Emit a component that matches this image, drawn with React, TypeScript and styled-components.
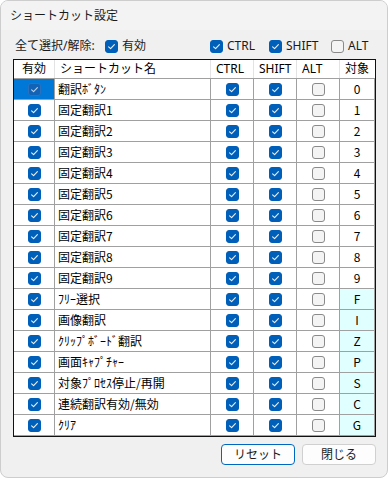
import React from "react";
import styled, { createGlobalStyle } from "styled-components";

const Global = createGlobalStyle`
  html, body { margin: 0; padding: 0; background: #ffffff; }
  *, *::before, *::after { box-sizing: border-box; }
`;

const UI_FONT = `"Noto Sans", "Noto Sans CJK JP", sans-serif`;
const GRID_FONT = `"Noto Sans CJK JP", "Noto Sans", sans-serif`;

const COLS = "41px 156px 43px 43px 43px 35px";

const Window = styled.div`
  width: 388px;
  height: 478px;
  border: 1px solid #cdcdcd;
  border-radius: 8px;
  background: #f0f0f0;
  overflow: hidden;
  display: flex;
  flex-direction: column;
  font-family: ${UI_FONT};
  color: #1b1b1b;
`;

const TitleBar = styled.div`
  height: 29px;
  flex: none;
  display: flex;
  align-items: center;
  padding-left: 9px;
  background: #f3f3f3;
  font-size: 12px;
  line-height: 1;
`;

const Body = styled.div`
  display: flex;
  flex-direction: column;
  padding: 0 12px;
`;

const OptionsRow = styled.div`
  margin-top: 6px;
  height: 20px;
  display: grid;
  grid-template-columns: 92px 105px 59px 62px 45px;
  align-items: center;
  font-size: 12px;
  line-height: 1;
`;

const OptionLabel = styled.span`
  padding-left: 2px;
  white-space: nowrap;
`;

const OptionItem = styled.label`
  display: flex;
  align-items: center;
  gap: 4px;
  white-space: nowrap;
`;

const Box = styled.span<{ $checked: boolean; $onSelected?: boolean }>`
  width: 13px;
  height: 13px;
  flex: none;
  border-radius: 3px;
  display: inline-flex;
  align-items: center;
  justify-content: center;
  background: ${(p) =>
    p.$checked ? (p.$onSelected ? "#1263b6" : "#005fb8") : "#f4f4f4"};
  border: ${(p) =>
    p.$checked
      ? p.$onSelected
        ? "1px solid #2a72c0"
        : "1px solid #005fb8"
      : "1px solid #8a8a8a"};
`;

const Check = ({ checked, onSelected }: { checked: boolean; onSelected?: boolean }) => (
  <Box $checked={checked} $onSelected={onSelected}>
    {checked && (
      <svg width="11" height="11" viewBox="0 0 11 11">
        <path
          d="M2.6 5.8 L4.6 7.7 L8.4 3.6"
          fill="none"
          stroke={onSelected ? "#b9d4f0" : "#e8f1fb"}
          strokeWidth="1.1"
          strokeLinecap="round"
          strokeLinejoin="round"
        />
      </svg>
    )}
  </Box>
);

const Table = styled.div`
  margin-top: 3px;
  width: 363px;
  border: 1px solid #111111;
  background: #ffffff;
  font-family: ${GRID_FONT};
  font-size: 12px;
  line-height: 1;
  color: #000000;
`;

const HeaderRow = styled.div`
  display: grid;
  grid-template-columns: ${COLS};
  height: 19px;
  border-bottom: 1px solid #a0a0a0;
  font-family: ${UI_FONT};
`;

const HeaderCell = styled.div<{ $align: "center" | "left"; $last?: boolean }>`
  display: flex;
  align-items: center;
  justify-content: ${(p) => (p.$align === "center" ? "center" : "flex-start")};
  padding-left: ${(p) => (p.$align === "center" ? "0" : "5px")};
  border-right: ${(p) => (p.$last ? "none" : "1px solid #e3e3e3")};
  white-space: nowrap;
  overflow: hidden;
`;

const Row = styled.div`
  display: grid;
  grid-template-columns: ${COLS};
  height: 21px;
`;

const Cell = styled.div<{ $align: "center" | "left"; $bg?: string }>`
  display: flex;
  align-items: center;
  justify-content: ${(p) => (p.$align === "center" ? "center" : "flex-start")};
  padding-left: ${(p) => (p.$align === "center" ? "0" : "3px")};
  background: ${(p) => p.$bg ?? "#ffffff"};
  border-right: 1px solid #a0a0a0;
  border-bottom: 1px solid #a0a0a0;
  white-space: nowrap;
  overflow: hidden;
`;

const ButtonRow = styled.div`
  margin-top: 7px;
  display: flex;
  justify-content: flex-end;
  gap: 7px;
  width: 363px;
`;

const Button = styled.button<{ $primary?: boolean }>`
  width: 74px;
  height: 21px;
  padding: 0;
  border-radius: 4px;
  background: #fdfdfd;
  border: 1px solid ${(p) => (p.$primary ? "#0067c0" : "#d0d0d0")};
  font-family: ${UI_FONT};
  font-size: 12px;
  line-height: 1;
  color: #1b1b1b;
`;

type Shortcut = { name: string; key: string; special: boolean };

const rows: Shortcut[] = [
  { name: "翻訳ﾎﾞﾀﾝ", key: "0", special: false },
  ...Array.from({ length: 9 }, (_, i) => ({
    name: `固定翻訳${i + 1}`,
    key: String(i + 1),
    special: false,
  })),
  { name: "ﾌﾘｰ選択", key: "F", special: true },
  { name: "画像翻訳", key: "I", special: true },
  { name: "ｸﾘｯﾌﾟﾎﾞｰﾄﾞ翻訳", key: "Z", special: true },
  { name: "画面ｷｬﾌﾟﾁｬｰ", key: "P", special: true },
  { name: "対象ﾌﾟﾛｾｽ停止/再開", key: "S", special: true },
  { name: "連続翻訳有効/無効", key: "C", special: true },
  { name: "ｸﾘｱ", key: "G", special: true },
];

export default function App() {
  return (
    <>
      <Global />
      <Window>
        <TitleBar>ショートカット設定</TitleBar>
        <Body>
          <OptionsRow>
            <OptionLabel>全て選択/解除:</OptionLabel>
            <OptionItem>
              <Check checked />
              有効
            </OptionItem>
            <OptionItem>
              <Check checked />
              CTRL
            </OptionItem>
            <OptionItem>
              <Check checked />
              SHIFT
            </OptionItem>
            <OptionItem>
              <Check checked={false} />
              ALT
            </OptionItem>
          </OptionsRow>

          <Table>
            <HeaderRow>
              <HeaderCell $align="center">有効</HeaderCell>
              <HeaderCell $align="left">ショートカット名</HeaderCell>
              <HeaderCell $align="left">CTRL</HeaderCell>
              <HeaderCell $align="left">SHIFT</HeaderCell>
              <HeaderCell $align="left">ALT</HeaderCell>
              <HeaderCell $align="left" $last>
                対象
              </HeaderCell>
            </HeaderRow>
            {rows.map((r, i) => (
              <Row key={r.name}>
                <Cell $align="center" $bg={i === 0 ? "#0078d7" : undefined}>
                  <Check checked onSelected={i === 0} />
                </Cell>
                <Cell $align="left">{r.name}</Cell>
                <Cell $align="center">
                  <Check checked />
                </Cell>
                <Cell $align="center">
                  <Check checked />
                </Cell>
                <Cell $align="center">
                  <Check checked={false} />
                </Cell>
                <Cell $align="center" $bg={r.special ? "#e0ffff" : undefined}>
                  {r.key}
                </Cell>
              </Row>
            ))}
          </Table>

          <ButtonRow>
            <Button $primary>リセット</Button>
            <Button>閉じる</Button>
          </ButtonRow>
        </Body>
      </Window>
    </>
  );
}
